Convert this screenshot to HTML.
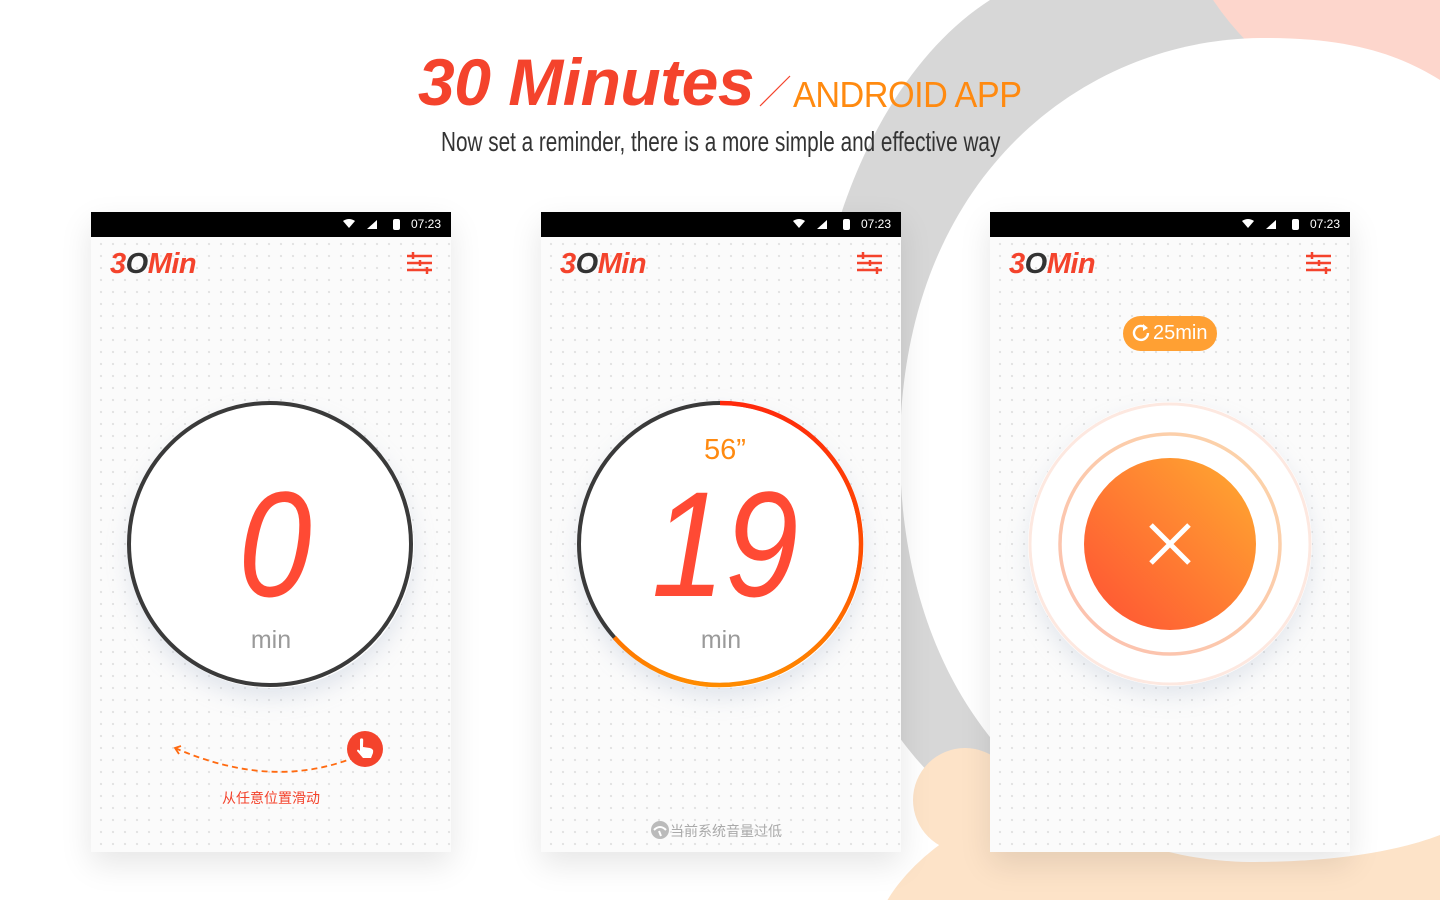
<!DOCTYPE html>
<html><head><meta charset="utf-8">
<style>
*{margin:0;padding:0;box-sizing:border-box}
html,body{width:1440px;height:900px;overflow:hidden}
body{background:#fff;position:relative;font-family:"Liberation Sans","Noto Sans CJK SC",sans-serif}
.bg{position:absolute;left:0;top:0}
.phone{position:absolute;top:212px;width:360px;height:640px;background-color:#fbfbfb;background-image:radial-gradient(circle,#e2e2e2 1px,transparent 1.3px);background-size:12px 12px;background-position:4px 2px;box-shadow:0 12px 30px rgba(0,0,0,.10)}
.sb{position:absolute;left:0;top:0;width:360px;height:25px;background:#000;color:#fff;font-size:12px}
.sb .t{position:absolute;right:10px;top:5px}
.logo{position:absolute;left:19px;top:36px;font-size:29px;font-weight:bold;font-style:italic;color:#f4432c;letter-spacing:-.5px}
.logo .o{color:#333}
.set{position:absolute;right:19px;top:39px}
.ring{position:absolute;left:37px;top:190px;width:286px;height:286px;border-radius:50%;background:#fff;box-shadow:0 10px 22px rgba(160,175,200,.28)}
.num{position:absolute;left:0;width:360px;text-align:center;font-style:italic;color:#ff4a34;font-size:150px;line-height:1;transform:scaleX(.88)}
.min{position:absolute;left:0;width:360px;text-align:center;top:414px;font-size:25px;color:#9a9a9a}
</style></head><body>
<svg class="bg" width="1440" height="900">
<path d="M990 0 C880 70 800 250 810 450 C820 620 880 740 960 800 L1440 900 L1440 0 Z" fill="#d7d7d7"/>
<circle cx="1440" cy="-150" r="272" fill="#fdd6cc"/>
<circle cx="965" cy="800" r="52" fill="#fde3c8"/>
<ellipse cx="1250" cy="960" rx="380" ry="200" fill="#fde3c8"/>
<path d="M900 450 C900 180 1080 40 1260 38 C1350 37 1400 55 1440 80 L1440 835 C1380 858 1300 862 1250 862 C1050 860 900 700 900 450 Z" fill="#fff"/>
</svg>

<div style="position:absolute;left:418px;top:44px;font-size:66px;font-weight:bold;font-style:italic;color:#f4432c;letter-spacing:-.5px;white-space:nowrap">30 Minutes</div>
<svg style="position:absolute;left:758px;top:74px" width="34" height="34"><line x1="2" y1="32" x2="32" y2="2" stroke="#f4432c" stroke-width="1.2"/></svg>
<div style="position:absolute;left:793px;top:74px;font-size:36px;color:#ff8a10;white-space:nowrap;letter-spacing:-.5px;transform:scaleX(.95);transform-origin:left">ANDROID APP</div>
<div style="position:absolute;left:441px;top:126px;font-size:28px;color:#333;white-space:nowrap;transform:scaleX(.74);transform-origin:left">Now set a reminder, there is a more simple and effective way</div>

<!-- phone 1 -->
<div class="phone" style="left:91px">
<div class="sb"><svg style="position:absolute;left:250px;top:6px" width="60" height="14"><path d="M2 3 Q8 -1 14 3 L8 10Z" fill="#fff"/><path d="M26 11 L36 2 L36 11Z" fill="#fff"/><rect x="52" y="1" width="7" height="11" rx="2" fill="#fff"/></svg><span class="t">07:23</span></div>
<div class="logo">3<span class="o">O</span>Min</div>
<svg class="set" width="25" height="24"><g stroke="#f4432c" stroke-width="2.5"><line x1="0" y1="5" x2="25" y2="5"/><line x1="0" y1="12" x2="25" y2="12"/><line x1="0" y1="19" x2="25" y2="19"/><line x1="6" y1="1" x2="6" y2="8"/><line x1="13" y1="9" x2="13" y2="15"/><line x1="20" y1="16" x2="20" y2="23"/></g></svg>
<div class="ring"></div>
<svg style="position:absolute;left:0;top:0" width="360" height="640"><circle cx="179" cy="332" r="141" fill="none" stroke="#3a3a3a" stroke-width="4"/></svg>
<div class="num" style="top:257px;left:4px">0</div>
<div class="min">min</div>
<svg style="position:absolute;left:0;top:500px" width="360" height="70"><path d="M84 36 Q180 78 262 46" fill="none" stroke="#ff6a10" stroke-width="1.8" stroke-dasharray="6 4"/><path d="M90 34 L84 36 L88 42" fill="none" stroke="#ff6a10" stroke-width="1.8"/><circle cx="274" cy="37" r="18" fill="#f4432c"/><path d="M269 28 a1.6 1.6 0 0 1 3.2 0 L272 35 L279 36 Q283 37 282 41 L280 46 L272 46 L266 39 Q266 37 268 38 L269 39Z" fill="#fff"/></svg>
<div style="position:absolute;left:0;width:360px;top:576px;text-align:center;font-size:14px;color:#f4432c">从任意位置滑动</div>
</div>

<!-- phone 2 -->
<div class="phone" style="left:541px">
<div class="sb"><svg style="position:absolute;left:250px;top:6px" width="60" height="14"><path d="M2 3 Q8 -1 14 3 L8 10Z" fill="#fff"/><path d="M26 11 L36 2 L36 11Z" fill="#fff"/><rect x="52" y="1" width="7" height="11" rx="2" fill="#fff"/></svg><span class="t">07:23</span></div>
<div class="logo">3<span class="o">O</span>Min</div>
<svg class="set" width="25" height="24"><g stroke="#f4432c" stroke-width="2.5"><line x1="0" y1="5" x2="25" y2="5"/><line x1="0" y1="12" x2="25" y2="12"/><line x1="0" y1="19" x2="25" y2="19"/><line x1="6" y1="1" x2="6" y2="8"/><line x1="13" y1="9" x2="13" y2="15"/><line x1="20" y1="16" x2="20" y2="23"/></g></svg>
<div class="ring"></div>
<svg style="position:absolute;left:0;top:0" width="360" height="640"><defs><linearGradient id="ag" x1="0" y1="191" x2="0" y2="475" gradientUnits="userSpaceOnUse"><stop offset="0" stop-color="#ff2a0c"/><stop offset=".55" stop-color="#ff5000"/><stop offset="1" stop-color="#ff8c00"/></linearGradient></defs>
<circle cx="179" cy="332" r="141" fill="none" stroke="#3a3a3a" stroke-width="4"/>
<path d="M179 191 A141 141 0 1 1 73.4 425.4" fill="none" stroke="url(#ag)" stroke-width="4.5"/></svg>
<div style="position:absolute;left:4px;width:360px;text-align:center;top:222px;font-size:29px;color:#ff8a10">56”</div>
<div class="num" style="top:257px;left:4px">19</div>
<div class="min">min</div>
<div style="position:absolute;left:109px;top:608px;font-size:14px;color:#aaa;white-space:nowrap"><svg width="20" height="20" style="vertical-align:-4px"><circle cx="10" cy="10" r="9" fill="#bbb"/><path d="M4 10 Q10 4 16 10" stroke="#fff" stroke-width="2" fill="none"/><path d="M9 11 L11 16" stroke="#fff" stroke-width="2"/></svg>当前系统音量过低</div>
</div>

<!-- phone 3 -->
<div class="phone" style="left:990px">
<div class="sb"><svg style="position:absolute;left:250px;top:6px" width="60" height="14"><path d="M2 3 Q8 -1 14 3 L8 10Z" fill="#fff"/><path d="M26 11 L36 2 L36 11Z" fill="#fff"/><rect x="52" y="1" width="7" height="11" rx="2" fill="#fff"/></svg><span class="t">07:23</span></div>
<div class="logo">3<span class="o">O</span>Min</div>
<svg class="set" width="25" height="24"><g stroke="#f4432c" stroke-width="2.5"><line x1="0" y1="5" x2="25" y2="5"/><line x1="0" y1="12" x2="25" y2="12"/><line x1="0" y1="19" x2="25" y2="19"/><line x1="6" y1="1" x2="6" y2="8"/><line x1="13" y1="9" x2="13" y2="15"/><line x1="20" y1="16" x2="20" y2="23"/></g></svg>
<div style="position:absolute;left:133px;top:104px;width:94px;height:35px;border-radius:18px;background:#ffa033;color:#fff;font-size:20px;line-height:35px;padding-left:8px;white-space:nowrap"><svg width="22" height="20" style="vertical-align:-3px"><path d="M15 6 A7 7 0 1 0 17 11" fill="none" stroke="#fff" stroke-width="2.4"/><path d="M12 2 L17 6 L12 9Z" fill="#fff"/></svg>25min</div>
<div style="position:absolute;left:38px;top:190px;width:284px;height:284px;border-radius:50%;background:#fff;box-shadow:0 10px 22px rgba(160,175,200,.25)"></div>
<svg style="position:absolute;left:0;top:0" width="360" height="640"><defs>
<linearGradient id="bg3" x1="0" y1="1" x2="1" y2="0"><stop offset="0" stop-color="#ff5034"/><stop offset="1" stop-color="#ffab30"/></linearGradient>
<linearGradient id="r2" x1="0" y1="1" x2="1" y2="0"><stop offset="0" stop-color="#fcc0b0"/><stop offset="1" stop-color="#fcd4a8"/></linearGradient></defs>
<circle cx="180" cy="332" r="140" fill="none" stroke="#fde8e0" stroke-width="3"/>
<circle cx="180" cy="332" r="110" fill="none" stroke="url(#r2)" stroke-width="3.5"/>
<circle cx="180" cy="332" r="86" fill="url(#bg3)"/>
<path d="M161 313 L199 351 M199 313 L161 351" stroke="#fff" stroke-width="5"/></svg>
</div>
</body></html>
